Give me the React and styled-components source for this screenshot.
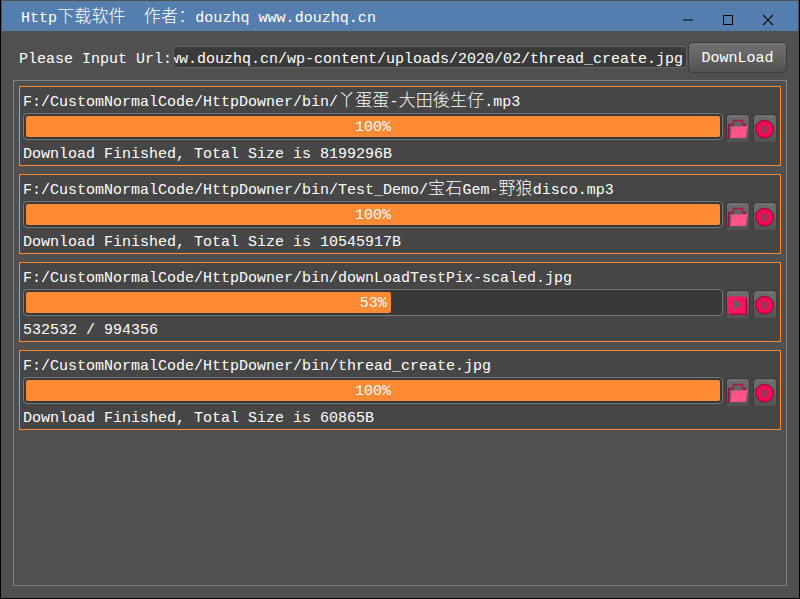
import React from "react";
import styled, { createGlobalStyle } from "styled-components";

const GlobalStyle = createGlobalStyle`
  *, *::before, *::after { box-sizing: border-box; }
  body { margin: 0; background: #000; }
`;

const Window = styled.div`
  display: flex;
  flex-direction: column;
  width: 800px;
  height: 599px;
  overflow: hidden;
  border: solid #000;
  border-width: 0 1px 1px 1px;
  background: #505050;
  color: #fff;
  font: 15px/18px "Liberation Mono", "Noto Sans CJK SC", monospace;
  white-space: pre;
`;

const TitleBar = styled.header`
  display: flex;
  justify-content: space-between;
  height: 30px;
  margin: 1px 1px 0;
  padding-left: 19px;
  background: #537eae;
`;

const Title = styled.div`
  line-height: 35px;
  height: 30px;
  letter-spacing: 0.03px;
`;

const Wide = styled.span`
  font: 300 17px/17px "Noto Sans CJK SC", sans-serif;
  letter-spacing: 0.15px;
`;

const WindowControls = styled.div`
  display: flex;
  padding: 4px 10px 0 0;
`;

const ControlButton = styled.button`
  display: flex;
  align-items: center;
  justify-content: center;
  width: 40px;
  height: 30px;
  padding: 0;
  border: 0;
  background: none;
`;

const UrlBar = styled.div`
  display: flex;
  align-items: flex-start;
  height: 49px;
  padding: 11px 12px 0 18px;
`;

const UrlLabel = styled.label`
  width: 154px;
  line-height: 35px;
`;

const UrlField = styled.div`
  display: flex;
  justify-content: flex-end;
  width: 515px;
  height: 22px;
  margin: 4px 1px 0 0;
  padding-right: 3px;
  overflow: hidden;
  border: 1px solid #626262;
  border-radius: 4px;
  background: #3a3a3a;
  line-height: 25px;
`;

const DownloadButton = styled.button`
  width: 99px;
  height: 31px;
  padding: 3px 0 0;
  border: 1px solid #3c3c3c;
  border-radius: 4px;
  background: linear-gradient(#727272, #525252);
  color: #fff;
  font: inherit;
`;

const TaskList = styled.main`
  display: flex;
  flex-direction: column;
  gap: 8px;
  width: 774px;
  height: 506px;
  margin-left: 12px;
  padding: 5px;
  border: 1px solid #808087;
`;

const TaskCard = styled.section`
  width: 762px;
  height: 80px;
  padding: 0 3px;
  border: 1px solid #ff8a33;
  background: #464646;
`;

const PathLine = styled.div`
  height: 26px;
  line-height: 31px;
`;

const ProgressRow = styled.div`
  display: flex;
  height: 28px;
`;

const ProgressTrack = styled.div`
  flex: none;
  width: 700px;
  height: 27px;
  padding: 2px;
  border: 1px solid #777;
  border-radius: 4px;
  background: #393939;
`;

const ProgressFill = styled.div`
  display: flex;
  align-items: center;
  justify-content: ${(p) => (p.$full ? "center" : "flex-end")};
  height: 21px;
  padding: 3px ${(p) => (p.$full ? "0" : "4px")} 0 0;
  border-radius: 2px;
  background: #ff8a33;
`;

const ToolButton = styled.button`
  flex: none;
  width: 24px;
  height: 28px;
  margin: 1px 0 0 3px;
  padding: 0;
  border: 1px solid #3b3b3b;
  border-bottom: 0;
  border-radius: 4px 4px 0 0;
  background: linear-gradient(#707070, #525252);

  svg { display: block; }
`;

const StatusLine = styled.div`
  height: 24px;
  line-height: 27px;
`;

const Label = ({ children }) =>
  children
    .split(/([\u3000-\u9fff\uff00-\uffef]+)/)
    .map((part, i) => (i % 2 ? <Wide key={i}>{part}</Wide> : part));

const FolderIcon = () => (
  <svg width="22" height="27">
    <path d="M3 22.5H1.7V9.5H6M15 9.5h3v2" fill="none" stroke="#a50b40" strokeWidth="1.5" />
    <path d="M6.5 10V5.5h9V10" fill="none" stroke="#b80c46" strokeWidth="1.4" />
    <path d="M4.6 11.8 20.5 11 19 23H3z" fill="#ff5289" />
  </svg>
);

const PlayIcon = () => (
  <svg width="22" height="27">
    <path d="M3 7h17v17H3z" fill="#a50b40" />
    <path d="M1 5.5h17.5v17H1z" fill="#ff155e" />
    <path d="M6.5 8 15 13.6 6.5 19.2z" fill="#6c5961" />
  </svg>
);

const CancelIcon = () => (
  <svg width="22" height="27">
    <circle cx="10.5" cy="14.2" r="8.7" fill="#ff0755" stroke="#a50b40" strokeWidth="1.4" />
    <path d="m7 10.7 7 7m0-7-7 7" stroke="#754352" strokeWidth="2" />
  </svg>
);

const tasks = [
  {
    path: "F:/CustomNormalCode/HttpDowner/bin/丫蛋蛋-大田後生仔.mp3",
    percent: 100,
    status: "Download Finished, Total Size is 8199296B",
  },
  {
    path: "F:/CustomNormalCode/HttpDowner/bin/Test_Demo/宝石Gem-野狼disco.mp3",
    percent: 100,
    status: "Download Finished, Total Size is 10545917B",
  },
  {
    path: "F:/CustomNormalCode/HttpDowner/bin/downLoadTestPix-scaled.jpg",
    percent: 53,
    status: "532532 / 994356",
  },
  {
    path: "F:/CustomNormalCode/HttpDowner/bin/thread_create.jpg",
    percent: 100,
    status: "Download Finished, Total Size is 60865B",
  },
];

const Task = ({ path, percent, status }) => {
  const full = percent === 100;
  return (
    <TaskCard>
      <PathLine><Label>{path}</Label></PathLine>
      <ProgressRow>
        <ProgressTrack>
          <ProgressFill $full={full} style={{ width: full ? "100%" : `calc(${percent}% - 3px)` }}>
            {percent}%
          </ProgressFill>
        </ProgressTrack>
        <ToolButton aria-label={full ? "Open folder" : "Resume"}>
          {full ? <FolderIcon /> : <PlayIcon />}
        </ToolButton>
        <ToolButton aria-label="Remove"><CancelIcon /></ToolButton>
      </ProgressRow>
      <StatusLine>{status}</StatusLine>
    </TaskCard>
  );
};

export default function App() {
  return (
    <>
      <GlobalStyle />
      <Window>
        <TitleBar>
          <Title><Label>{"Http下载软件  作者：douzhq www.douzhq.cn"}</Label></Title>
          <WindowControls>
            <ControlButton aria-label="Minimize">
              <svg width="12" height="12"><path d="M1 6h10" stroke="#2b4058" strokeWidth="2" /></svg>
            </ControlButton>
            <ControlButton aria-label="Maximize">
              <svg width="12" height="12"><path d="M1.5 1.5h9v9h-9z" fill="none" stroke="#000" /></svg>
            </ControlButton>
            <ControlButton aria-label="Close">
              <svg width="12" height="12"><path d="m1 1 10 10M11 1 1 11" stroke="#0c1219" strokeWidth="1.1" /></svg>
            </ControlButton>
          </WindowControls>
        </TitleBar>
        <UrlBar>
          <UrlLabel>Please Input Url:</UrlLabel>
          <UrlField>
            <span>ww.douzhq.cn/wp-content/uploads/2020/02/thread_create.jpg</span>
          </UrlField>
          <DownloadButton>DownLoad</DownloadButton>
        </UrlBar>
        <TaskList>
          {tasks.map((task) => <Task key={task.path} {...task} />)}
        </TaskList>
      </Window>
    </>
  );
}
